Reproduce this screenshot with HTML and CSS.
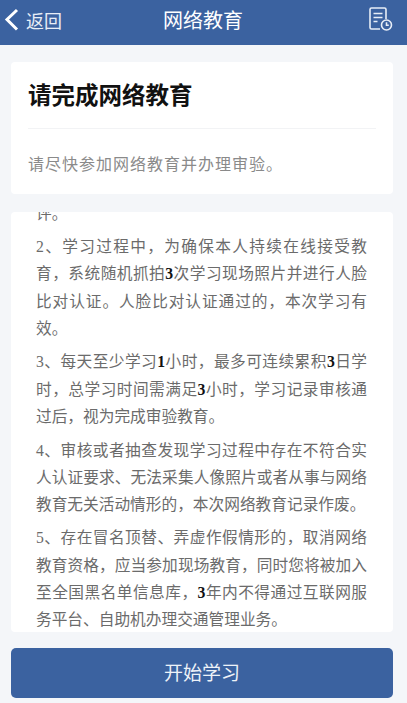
FILE: index.html
```html
<!DOCTYPE html>
<html lang="zh-CN">
<head>
  <meta charset="UTF-8" />
  <meta name="viewport" content="width=device-width, initial-scale=1.0"/>
  <title>网络教育</title>
  <link rel="stylesheet" href="styles.css">
</head>
<body>
  <header class="topbar">
    <a class="back">
      <svg class="back-icon" width="16" height="24" viewBox="0 0 16 24"><path d="M14 2 4 11.500 14 21.500" fill="none" stroke="#fff" stroke-width="3"/></svg>
      <span>返回</span>
    </a>
    <h1 class="page-title">网络教育</h1>
    <svg class="record-icon" width="25" height="25" viewBox="0 0 25 25" fill="none" stroke="#e8eef7" stroke-width="1.6">
      <path d="M12 22H3.500A1.500 1.500 0 0 1 2 20.500V2.500A1.500 1.500 0 0 1 3.500 1h13A1.500 1.500 0 0 1 18 2.500V12"/>
      <path d="M5.500 6.500h9M5.500 10.500h9M5.500 14.500h4"/>
      <circle cx="18.500" cy="18" r="5"/>
      <path d="M18.500 15.300v3h2.300"/>
    </svg>
  </header>

  <main class="content">
    <section class="card intro">
      <h2 class="intro-title">请完成网络教育</h2>
      <p class="intro-text">请尽快参加网络教育并办理审验。</p>
    </section>

    <section class="card rules">
      <div class="rules-text">
        <p>评。</p>
        <p>
          <span class="line"><span class="num">2</span>、学习过程中，为确保本人持续在线接受教</span>
          <span class="line">育，系统随机抓拍<b>3</b>次学习现场照片并进行人脸</span>
          <span class="line">比对认证。人脸比对认证通过的，本次学习有</span>
          效。
        </p>
        <p>
          <span class="line"><span class="num">3</span>、每天至少学习<b>1</b>小时，最多可连续累积<b>3</b>日学</span>
          <span class="line">时，总学习时间需满足<b>3</b>小时，学习记录审核通</span>
          过后，视为完成审验教育。
        </p>
        <p>
          <span class="line"><span class="num">4</span>、审核或者抽查发现学习过程中存在不符合实</span>
          <span class="line">人认证要求、无法采集人像照片或者从事与网络</span>
          教育无关活动情形的，本次网络教育记录作废。
        </p>
        <p>
          <span class="line"><span class="num">5</span>、存在冒名顶替、弄虚作假情形的，取消网络</span>
          <span class="line">教育资格，应当参加现场教育，同时您将被加入</span>
          <span class="line">至全国黑名单信息库，<b>3</b>年内不得通过互联网服</span>
          务平台、自助机办理交通管理业务。
        </p>
      </div>
    </section>

    <button class="start-btn">开始学习</button>
  </main>
</body>
</html>
```

FILE: styles.css
```css
* {
  margin: 0;
  padding: 0;
  box-sizing: border-box;
}

body {
  width: 407px;
  height: 703px;
  overflow: hidden;
  background-color: #f4f6f9;
  font-family: "Noto Sans CJK SC", "Noto Sans", sans-serif;
}

.topbar {
  position: relative;
  display: flex;
  align-items: center;
  justify-content: space-between;
  height: 45px;
  padding: 0 14px 6px 3px;
  background-color: #3b62a0;
  color: #fff;
}

.back {
  display: flex;
  align-items: center;
  gap: 7px;
  font-size: 18px;
  color: #e8eef7;
}

.page-title {
  position: absolute;
  left: -1px;
  right: 0;
  text-align: center;
  font-size: 20px;
  font-weight: 400;
}

.content {
  display: flex;
  flex-direction: column;
  padding: 17px 14px 0 11px;
}

.card {
  background-color: #fff;
  border-radius: 4px;
}

.intro {
  height: 132px;
  padding: 15px 17px 0;
}

.intro-title {
  height: 52px;
  border-bottom: 1px solid #f2f3f5;
  font-size: 23.500px;
  line-height: 34px;
  font-weight: 700;
  color: #111;
}

.intro-text {
  margin-top: 21px;
  font-size: 16px;
  line-height: 26px;
  letter-spacing: 1px;
  color: #8a8a8a;
}

.rules {
  height: 420px;
  margin-top: 18px;
  padding: 0 26px 0 25px;
  overflow: hidden;
}

.rules-text {
  margin-top: -12.500px;
  font-size: 15.700px;
  line-height: 26.700px;
  color: #6b6b6b;
}

.rules-text p {
  margin-bottom: 6.500px;
}

.line {
  display: block;
  text-align: justify;
  text-align-last: justify;
}

.rules-text b,
.num {
  font-family: "Liberation Serif", serif;
}

.rules-text b {
  color: #111;
}

.start-btn {
  height: 50px;
  margin-top: 16px;
  border: none;
  border-radius: 5px;
  background-color: #3b62a0;
  font-family: inherit;
  font-size: 19px;
  color: #eef2f8;
  padding-bottom: 3px;
}
```
